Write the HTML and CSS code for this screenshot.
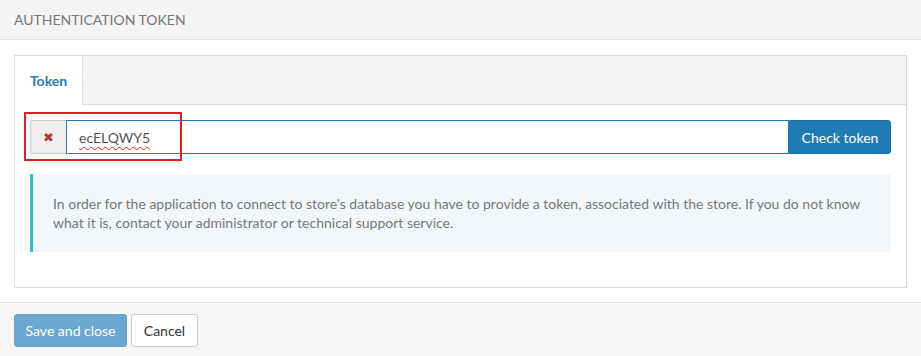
FILE: index.html
```html
<!DOCTYPE html>
<html lang="en">
<head>
    <meta charset="UTF-8" />
    <title>Authentication token</title>
    <link rel="stylesheet" href="styles.css">
</head>
<body>

<div class="modal">
    <!-- Header -->
    <div class="modal-header">
        <h4>Authentication token</h4>
    </div>

    <!-- Body -->
    <div class="modal-body">
        <div class="panel">
            <ul class="tabs">
                <li class="active">Token</li>
            </ul>
            <div class="tab-content">
                <div class="input-group">
                    <span class="addon clear">&#10006;</span>
                    <div class="token-field"><span class="typo">ecELQWY5</span></div>
                    <button class="btn btn-primary">Check token</button>
                    <span class="highlight"></span>
                </div>

                <div class="info">
                    In order for the application to connect to store's database you have to provide a token, associated with the store. If you do not know what it is, contact your administrator or technical support service.
                </div>
            </div>
        </div>
    </div>

    <!-- Footer -->
    <div class="modal-footer">
        <button class="btn btn-save">Save and close</button>
        <button class="btn btn-default">Cancel</button>
    </div>
</div>

</body>
</html>
```

FILE: styles.css
```css
body {
    margin: 0;
    font-family: Lato, "Open Sans", sans-serif;
    font-size: 14px;
    color: #777;
    background: #fff;
    overflow: hidden;
}

.modal {
    width: 921px;
    display: flex;
    flex-direction: column;
}

.modal-header {
    background: #f4f4f4;
    border-bottom: 1px solid #e3e3e3;
    height: 39px;
    padding: 0 14px;
    display: flex;
    align-items: center;
}

.modal-header h4 {
    margin: 0;
    font-size: 14px;
    font-weight: normal;
    text-transform: uppercase;
    color: #777;
}

.modal-body {
    padding: 15px 14px 14px 14px;
}

.panel {
    border: 1px solid #ddd;
    width: 893px;
    height: 233px;
    box-sizing: border-box;
}

.tabs {
    list-style: none;
    margin: 0;
    padding: 0;
    background: #f4f4f4;
    border-bottom: 1px solid #ddd;
    height: 48px;
    display: flex;
}

.tabs li {
    width: 68px;
    box-sizing: border-box;
    border-right: 1px solid #ddd;
    background: #fff;
    height: 49px;
    display: flex;
    align-items: center;
    justify-content: center;
    color: #2a7ab8;
    font-weight: bold;
    font-size: 14px;
}

.tab-content {
    padding: 15px 15px 0 15px;
}

.input-group {
    position: relative;
    display: flex;
    height: 34px;
}

.addon {
    width: 36px;
    box-sizing: border-box;
    background: #eee;
    border: 1px solid #ccc;
    border-right: none;
    border-radius: 3px 0 0 3px;
    display: flex;
    align-items: center;
    justify-content: center;
    color: #b03a37;
    font-size: 13px;
}

.token-field {
    flex: 1;
    border: 1px solid #1d7ab7;
    display: flex;
    align-items: center;
    padding: 0 12px;
    color: #555;
    font-size: 14px;
}

.typo {
    text-decoration: underline wavy #e02020;
    text-decoration-thickness: 1px;
    text-underline-offset: 3px;
}

.highlight {
    position: absolute;
    left: -6px;
    top: -8px;
    width: 158px;
    height: 49px;
    border: 2px solid #e31e24;
    box-sizing: border-box;
}

.btn {
    font-family: Lato, "Open Sans", sans-serif;
    font-size: 14px;
    border-radius: 3px;
    cursor: pointer;
    padding: 0;
    box-sizing: border-box;
    white-space: nowrap;
}

.btn-primary {
    background: #1f7bb6;
    border: 1px solid #1b6fa5;
    color: #fff;
    width: 102px;
    border-radius: 0 3px 3px 0;
}

.info {
    margin-top: 20px;
    background: #f3f7fa;
    border-left: 3px solid #2bc0cb;
    padding: 20px 20px 20px 20px;
    line-height: 19px;
    height: 38px;
    color: #777;
}

.modal-footer {
    background: #f7f7f7;
    border-top: 1px solid #e5e5e5;
    padding: 11px 14px;
    display: flex;
    gap: 4px;
    height: 44px;
}

.btn-save {
    background: #6aa8d2;
    border: 1px solid #66a3cc;
    color: #fff;
    width: 113px;
    height: 33px;
}

.btn-default {
    background: #fff;
    border: 1px solid #ccc;
    color: #333;
    width: 67px;
    height: 33px;
}
```
